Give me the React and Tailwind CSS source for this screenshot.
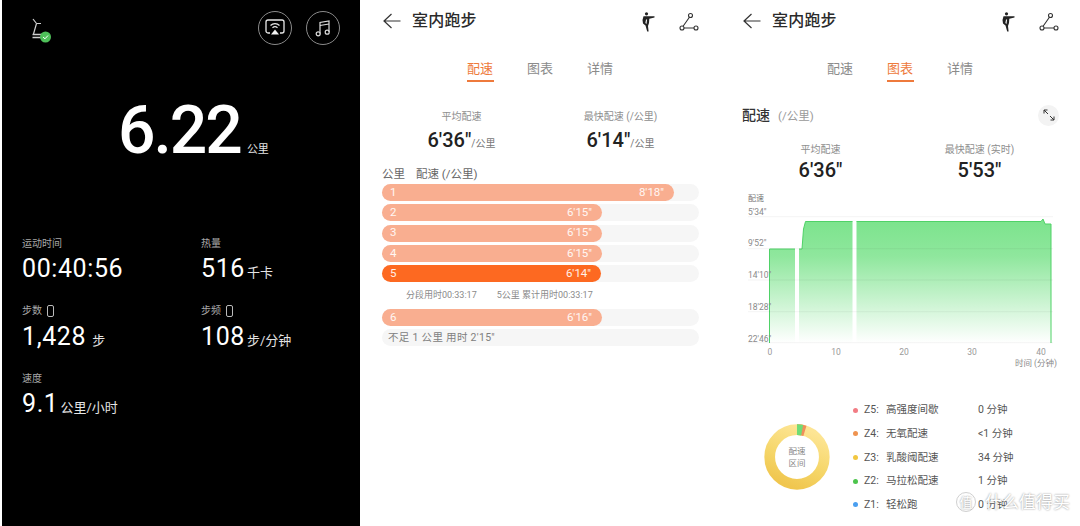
import { useState } from 'react';

const sans = "font-['Roboto','Noto_Sans_CJK_SC',sans-serif]";

function Treadmill() {
  return (
    <svg width="26" height="26" viewBox="0 0 26 26" fill="none" className="shrink-0">
      <path d="M5 2l3.500 4.500M8.500 6.500h4.500M8.500 6.500L5.500 17" stroke="#cfcfcf" strokeWidth="1.200" />
      <path d="M4.500 17.500h12M4.500 20.500h12" stroke="#cfcfcf" strokeWidth="1.300" />
      <circle cx="17.500" cy="20" r="5.500" fill="#4fc15a" />
      <path d="M15 20l2 1.800 3-3.300" stroke="#fff" strokeWidth="1" />
    </svg>
  );
}

function CastIcon() {
  return (
    <svg width="20" height="18" viewBox="0 0 20 18" fill="none">
      <path d="M5 14H3a2 2 0 01-2-2V3a2 2 0 012-2h14a2 2 0 012 2v9a2 2 0 01-2 2h-2" stroke="#e8e8e8" strokeWidth="1.300" />
      <path d="M5.500 6.500a6.500 6.500 0 019 0M7.500 8.800a3.600 3.600 0 015 0" stroke="#e8e8e8" strokeWidth="1.200" />
      <path d="M10 10.500l4 5H6z" fill="#f2f2f2" />
    </svg>
  );
}

function MusicIcon() {
  return (
    <svg width="16" height="18" viewBox="0 0 16 18" fill="none" stroke="#dcdcdc" strokeWidth="1.200">
      <path d="M5 14.500V3.500l9-1.500v11" />
      <path d="M5 6.500l9-1.500" />
      <circle cx="3.200" cy="14.800" r="2" />
      <circle cx="12.200" cy="13.200" r="2" />
    </svg>
  );
}

function RunnerIcon() {
  return (
    <svg width="14" height="20" viewBox="0 0 14 20" fill="#222">
      <circle cx="5.500" cy="1.800" r="1.600" />
      <path d="M2.500 4.300h11v1.300L8.300 6.800 8 11 7 14l.6 5.500H6.200L4.500 13.500 2 11.500 1.500 8z" />
      <path d="M5 7.500l-.6 3.500 1.100 1 .6-4.500z" fill="#fff" />
    </svg>
  );
}

function RouteIcon() {
  return (
    <svg width="20" height="20" viewBox="0 0 20 20" fill="none" stroke="#333" strokeWidth="1.100">
      <circle cx="11.500" cy="3.500" r="2" />
      <circle cx="3" cy="16" r="2" />
      <circle cx="17" cy="16" r="2" />
      <path d="M10.400 5.200L4.100 14.300M5 16h10" />
    </svg>
  );
}

function BackArrow() {
  return (
    <svg width="18" height="16" viewBox="0 0 18 16" fill="none" stroke="#333" strokeWidth="1.200">
      <path d="M17.500 8H1M8.500 1L1 8l7.500 7" />
    </svg>
  );
}

function ExpandIcon() {
  return (
    <svg width="12" height="12" viewBox="0 0 12 12" fill="none" stroke="#333" strokeWidth="1">
      <path d="M1 4.500V1h3.500M1 1l4 4M11 7.500V11H7.500M11 11L7 7" />
    </svg>
  );
}

function Stat({ label, phone, value, unit, unitClass }) {
  return (
    <div className="h-[67.500px]">
      <div className="flex items-center gap-[5px] h-[14px] text-[10px] text-[#a8a8a8]">
        {label}
        {phone && <span className="w-[7px] h-[12px] rounded-[2px] border border-[#bbbbbb]" />}
      </div>
      <div className="flex items-baseline mt-[4px] text-white">
        <span className="text-[25px] leading-[30px] tracking-[0.6px]">{value}</span>
        <span className={`text-[13px] text-[#e4e4e4] ${unitClass || 'ml-[2px]'}`}>{unit}</span>
      </div>
    </div>
  );
}

function Header() {
  return (
    <div className="flex items-center h-[42px] pl-[23px] pr-[21px]">
      <BackArrow />
      <div className="ml-[11px] text-[16px] text-[#2a2a2a] font-medium tracking-[0.2px]">室内跑步</div>
      <div className="ml-auto mr-[24px] mt-[1px]">
        <RunnerIcon />
      </div>
      <div className="mt-[1px]">
        <RouteIcon />
      </div>
    </div>
  );
}

function Tabs({ tabs, active, onChange }) {
  return (
    <div className="flex justify-center gap-[33px] mt-[14px]">
      {tabs.map((t) => (
        <button
          key={t}
          onClick={() => onChange(t)}
          className={`w-[27px] h-[26px] pt-[2px] border-b-2 text-[13px] leading-[20px] whitespace-nowrap ${
            active === t ? 'border-[#ee7a3c] text-[#ee7a3c]' : 'border-transparent text-[#8b8b8b]'
          }`}
        >
          {t}
        </button>
      ))}
    </div>
  );
}

function Bar({ num, pace, width, dark }) {
  return (
    <div className="h-[17px] rounded-full bg-[#f6f6f6]">
      <div
        className={`h-[17px] rounded-full flex items-center justify-between pl-[8px] pr-[10px] text-[11.500px] text-white/90 ${
          dark ? 'bg-[#fd6921]' : 'bg-[#f9ae90]'
        }`}
        style={{ width }}
      >
        <span>{num}</span>
        <span>{pace}</span>
      </div>
    </div>
  );
}

function PaceChart() {
  const area =
    'M769.500 342V248H795V342ZM799 342V248H802L803.500 228L805.500 220.500H852.500V342ZM856.500 342V220.500H1041L1043 218L1045 223H1051V342Z';
  const line =
    'M769.500 342V248H795M799 248H802L803.500 228L805.500 220.500H852.500M856.500 220.500H1041L1043 218L1045 223H1051V342';
  const ticks = [
    ['5\'34"', 215.700, 214],
    ['9\'52"', 247.700, 245],
    ['14\'10"', 279, 277],
    ['18\'28"', 310.700, 309],
    ['22\'46"', 341.700, 341],
  ];
  return (
    <svg width="360" height="185" viewBox="720 190 360 185" className="mt-[8px]">
      <defs>
        <linearGradient id="paceFill" x1="0" y1="0" x2="0" y2="1">
          <stop offset="0" stopColor="#7be38c" />
          <stop offset="0.300" stopColor="#8fe79d" />
          <stop offset="1" stopColor="#ffffff" />
        </linearGradient>
      </defs>
      <text x="748" y="200" fontSize="8" fill="#777">配速</text>
      <path d={area} fill="url(#paceFill)" />
      <path d={line} fill="none" stroke="#4fd267" strokeWidth="1" />
      {ticks.map(([label, y, ty]) => (
        <g key={label}>
          <line x1="748" x2="1053" y1={y} y2={y} stroke="#000" strokeOpacity="0.070" strokeWidth="0.700" />
          <text x="748" y={ty} fontSize="8.500" fill="#8a8a8a">{label}</text>
        </g>
      ))}
      {[[770, '0'], [836, '10'], [904, '20'], [972, '30'], [1041, '40']].map(([x, t]) => (
        <text key={t} x={x} y="354" fontSize="8.500" fill="#999" textAnchor="middle">{t}</text>
      ))}
      <text x="1057" y="365" fontSize="8.500" fill="#8a8a8a" textAnchor="end">时间 (分钟)</text>
    </svg>
  );
}

function Donut() {
  const r = 27.300;
  const c = 2 * Math.PI * r;
  return (
    <div className="relative w-[66px] h-[66px] shrink-0">
      <svg width="66" height="66" viewBox="0 0 66 66">
        <defs>
          <linearGradient id="donutFill" x1="0.700" y1="0" x2="0.300" y2="1">
            <stop offset="0" stopColor="#fde594" />
            <stop offset="0.600" stopColor="#f5d567" />
            <stop offset="1" stopColor="#f0c64f" />
          </linearGradient>
        </defs>
        <circle cx="33" cy="33" r={r} fill="none" stroke="url(#donutFill)" strokeWidth="10.700" />
        <g transform="rotate(-90 33 33)">
          <circle cx="33" cy="33" r={r} fill="none" stroke="#ef8f5a" strokeWidth="10.700" strokeDasharray={`${c * 0.047} ${c}`} />
          <circle cx="33" cy="33" r={r} fill="none" stroke="#6fdc76" strokeWidth="10.700" strokeDasharray={`${c * 0.05} ${c}`} strokeDashoffset={c * 0.02} />
        </g>
      </svg>
      <div className="absolute inset-0 flex flex-col items-center justify-center text-[8.500px] leading-[12px] text-[#8a8a8a]">
        <span>配速</span>
        <span>区间</span>
      </div>
    </div>
  );
}

const zones = [
  ['bg-[#f27c84]', 'Z5:', '高强度间歇', '0 分钟'],
  ['bg-[#ef9350]', 'Z4:', '无氧配速', '<1 分钟'],
  ['bg-[#f2c740]', 'Z3:', '乳酸阈配速', '34 分钟'],
  ['bg-[#4cc44c]', 'Z2:', '马拉松配速', '1 分钟'],
  ['bg-[#4a9ff0]', 'Z1:', '轻松跑', '0 分钟'],
];

export default function App() {
  const [tabA, setTabA] = useState('配速');
  const [tabB, setTabB] = useState('图表');
  const tabs = ['配速', '图表', '详情'];

  return (
    <div className={`relative w-[1080px] h-[526px] flex bg-white overflow-hidden ${sans}`}>
      {/* 运动中 */}
      <div className="w-[358px] h-full ml-[2px] bg-black shrink-0">
        <div className="flex items-start pt-[11px] pl-[26px] pr-[20px]">
          <div className="mt-[6px]">
            <Treadmill />
          </div>
          <div className="ml-auto flex gap-[14px]">
            <div className="w-[34px] h-[34px] rounded-full border border-[#8a8a8a] flex items-center justify-center">
              <CastIcon />
            </div>
            <div className="w-[34px] h-[34px] rounded-full border border-[#8a8a8a] flex items-center justify-center">
              <MusicIcon />
            </div>
          </div>
        </div>
        <div className="flex items-baseline mt-[41px] pl-[116px] text-white">
          <span className="text-[66px] leading-[90px] font-medium tracking-[-2px]">6.22</span>
          <span className="ml-[6px] text-[11px] text-[#e4e4e4]">公里</span>
        </div>
        <div className="grid grid-cols-[179px_1fr] mt-[60px] pl-[20px]">
          <Stat label="运动时间" value="00:40:56" />
          <Stat label="热量" value="516" unit="千卡" />
          <Stat label="步数" phone value="1,428" unit="步" unitClass="ml-[6px]" />
          <Stat label="步频" phone value="108" unit="步/分钟" />
          <Stat label="速度" value="9.1" unit="公里/小时" />
        </div>
      </div>

      {/* 配速 */}
      <div className="w-[360px] shrink-0">
        <Header />
        <Tabs tabs={tabs} active={tabA} onChange={setTabA} />
        <div className="grid grid-cols-[159px_159px] mt-[28px] ml-[22px] text-center">
          <div>
            <div className="text-[10px] text-[#8e8e8e] leading-[14px]">平均配速</div>
            <div className="flex items-baseline justify-center mt-[3px]">
              <span className="text-[20px] leading-[26px] font-medium text-[#222]">6'36"</span>
              <span className="text-[10px] text-[#777]">/公里</span>
            </div>
          </div>
          <div>
            <div className="text-[10px] text-[#8e8e8e] leading-[14px]">最快配速 (/公里)</div>
            <div className="flex items-baseline justify-center mt-[3px]">
              <span className="text-[20px] leading-[26px] font-medium text-[#222]">6'14"</span>
              <span className="text-[10px] text-[#777]">/公里</span>
            </div>
          </div>
        </div>
        <div className="mt-[13px] ml-[22px] flex gap-[11px] text-[11.500px] leading-[16px] text-[#666]">
          <span>公里</span>
          <span>配速 (/公里)</span>
        </div>
        <div className="flex flex-col gap-[3.300px] mt-[2px] ml-[22px] mr-[21px]">
          <Bar num="1" pace={'8\'18"'} width={292} />
          <Bar num="2" pace={'6\'15"'} width={220} />
          <Bar num="3" pace={'6\'15"'} width={220} />
          <Bar num="4" pace={'6\'15"'} width={220} />
          <Bar num="5" pace={'6\'14"'} width={219} dark />
          <div className="flex h-[20px] items-center pl-[24px] gap-[20px] text-[9px] text-[#8a8a8a]">
            <span>分段用时00:33:17</span>
            <span>5公里 累计用时00:33:17</span>
          </div>
          <Bar num="6" pace={'6\'16"'} width={220} />
          <div className="h-[17px] rounded-full bg-[#f6f6f6] pl-[6px] flex items-center text-[10.500px] text-[#808080] tracking-[0.3px]">
            不足 1 公里 用时 2'15"
          </div>
        </div>
      </div>

      {/* 图表 */}
      <div className="w-[360px] shrink-0">
        <Header />
        <Tabs tabs={tabs} active={tabB} onChange={setTabB} />
        <div className="flex items-center justify-between mt-[22px] ml-[22px] mr-[21px] h-[22px]">
          <div className="flex items-baseline gap-[8px]">
            <span className="text-[14px] text-[#333] font-medium">配速</span>
            <span className="text-[11.500px] text-[#999]">(/公里)</span>
          </div>
          <div className="w-[21px] h-[21px] rounded-full bg-[#f3f3f3] flex items-center justify-center">
            <ExpandIcon />
          </div>
        </div>
        <div className="grid grid-cols-[159px_159px] mt-[17px] ml-[21px] text-center">
          <div>
            <div className="text-[10px] text-[#8e8e8e] leading-[14px]">平均配速</div>
            <div className="text-[20px] leading-[26px] font-medium text-[#222]">6'36"</div>
          </div>
          <div>
            <div className="text-[10px] text-[#8e8e8e] leading-[14px]">最快配速 (实时)</div>
            <div className="text-[20px] leading-[26px] font-medium text-[#222]">5'53"</div>
          </div>
        </div>
        <PaceChart />
        <div className="flex items-center mt-[26px] pl-[44px]">
          <Donut />
          <div className="flex flex-col ml-[23px] gap-[7.700px]">
            {zones.map(([dot, z, name, val]) => (
              <div key={z} className="flex items-center h-[16px] text-[10.500px] text-[#555]">
                <span className={`w-[5px] h-[5px] rounded-full ${dot}`} />
                <span className="ml-[6px] w-[22px]">{z}</span>
                <span className="w-[92px]">{name}</span>
                <span>{val}</span>
              </div>
            ))}
          </div>
        </div>
      </div>

      {/* 水印 */}
      <div className="absolute right-[10px] bottom-[11px] flex items-center gap-[9px] text-[#ffffff] [text-shadow:0_0_2px_#808080]">
        <span className="w-[20px] h-[20px] rounded-full border border-[#d0d0d0] flex items-center justify-center text-[13px]">值</span>
        <span className="text-[17px]">什么值得买</span>
      </div>
    </div>
  );
}
